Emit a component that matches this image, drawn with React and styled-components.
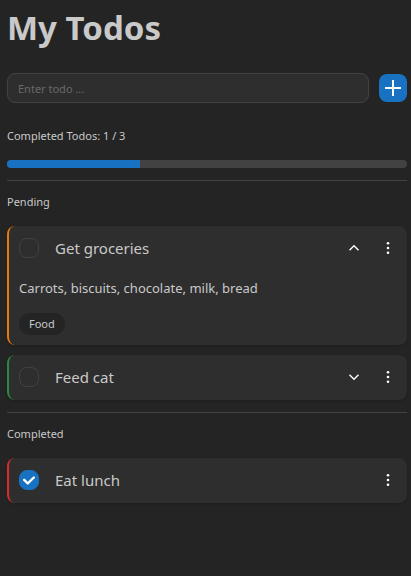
import React, { useState } from "react";
import styled, { createGlobalStyle } from "styled-components";

const GlobalStyle = createGlobalStyle`
  *, *::before, *::after { box-sizing: border-box; }
  body {
    margin: 0;
    background: #242424;
    color: #c9c9c9;
    font-family: "Segoe UI", "Noto Sans", "Open Sans", sans-serif;
    font-size: 15px;
    line-height: 25px;
  }
`;

const Page = styled.main`
  padding: 6px 4px 16px 7px;
`;

const Title = styled.h1`
  margin: 0;
  font-size: 33px;
  line-height: 44px;
  font-weight: 700;
`;

const AddForm = styled.form`
  display: flex;
  align-items: center;
  gap: 10px;
  margin-top: 23px;
`;

const TodoInput = styled.input`
  flex: 1;
  min-width: 0;
  height: 30px;
  padding: 0 10px;
  border: 1px solid #424242;
  border-radius: 8px;
  background: #2e2e2e;
  color: #c9c9c9;
  font-family: inherit;
  font-size: 11px;
  &::placeholder { color: #696969; opacity: 1; }
  &:focus { outline: none; border-color: #1971c2; }
`;

const AddButton = styled.button`
  display: flex;
  align-items: center;
  justify-content: center;
  width: 28px;
  height: 28px;
  padding: 0;
  border: 0;
  border-radius: 8px;
  background: #1971c2;
  color: #fff;
  cursor: pointer;
`;

const Label = styled.h2`
  margin: 0;
  font-size: 11px;
  line-height: 18px;
  font-weight: 400;
`;

const Summary = styled.section`
  display: flex;
  flex-direction: column;
  gap: 15px;
  margin-top: 24px;
`;

const Track = styled.div`
  height: 8px;
  border-radius: 4px;
  background: #424242;
  overflow: hidden;
`;

const Bar = styled.div`
  height: 100%;
  background: #1971c2;
`;

const Divider = styled.hr`
  height: 1px;
  margin: 12px 0;
  border: 0;
  background: #424242;
`;

const List = styled.ul`
  display: flex;
  flex-direction: column;
  gap: 10px;
  margin: 15px 0 0;
  padding: 0;
  list-style: none;
`;

const Card = styled.li`
  padding: 10px;
  border-left: 2px solid ${(p) => p.$accent};
  border-radius: 8px;
  background: #2e2e2e;
  box-shadow: 0 1px 3px rgba(0, 0, 0, 0.05), 0 1px 2px rgba(0, 0, 0, 0.1);
`;

const CardHeader = styled.div`
  display: flex;
  align-items: center;
  gap: 16px;
`;

const CheckLabel = styled.label`
  display: flex;
  flex: 1;
  align-items: center;
  gap: 16px;
  min-width: 0;
  cursor: pointer;
`;

const CheckWrap = styled.span`
  display: grid;
  height: 24px;
  align-self: flex-start;
  place-items: center;
  & > * { grid-area: 1 / 1; }
  svg { pointer-events: none; z-index: 1; }
`;

const Checkbox = styled.input`
  appearance: none;
  width: 20px;
  height: 20px;
  margin: 0;
  border: 1px solid #424242;
  border-radius: 8px;
  background: #2e2e2e;
  cursor: pointer;
  &:checked { border-color: #1971c2; background: #1971c2; }
`;

const IconButton = styled.button`
  display: flex;
  align-items: center;
  justify-content: center;
  align-self: flex-start;
  width: 18px;
  height: 24px;
  padding: 0;
  border: 0;
  border-radius: 4px;
  background: transparent;
  color: #fff;
  cursor: pointer;
`;

const Description = styled.p`
  margin: 16px 0 14px;
  font-size: 13px;
  line-height: 22px;
`;

const Tag = styled.span`
  display: block;
  width: fit-content;
  padding: 0 10px;
  border-radius: 11px;
  background: #242424;
  font-size: 11px;
  line-height: 22px;
`;

const PlusIcon = () => (
  <svg width="18" height="18" viewBox="0 0 18 18" fill="none" stroke="currentColor" strokeWidth="2" aria-hidden="true">
    <path d="M9 1v16M1 9h16" />
  </svg>
);

const ChevronIcon = ({ up }) => (
  <svg width="18" height="18" viewBox="0 0 18 18" fill="none" stroke="currentColor" strokeWidth="1.4" aria-hidden="true">
    <path d={up ? "M4.5 11.3 9 6.8l4.5 4.5" : "M4.5 6.7 9 11.2l4.5-4.5"} />
  </svg>
);

const DotsIcon = () => (
  <svg width="18" height="18" viewBox="0 0 18 18" fill="currentColor" aria-hidden="true">
    <circle cx="9" cy="4.3" r="1.3" />
    <circle cx="9" cy="9" r="1.3" />
    <circle cx="9" cy="13.7" r="1.3" />
  </svg>
);

const CheckIcon = () => (
  <svg width="12" height="9" viewBox="0 0 10 7" fill="#fff" aria-hidden="true">
    <path
      fillRule="evenodd"
      clipRule="evenodd"
      d="M4 4.586L1.707 2.293A1 1 0 1 0 .293 3.707l3 3a.997.997 0 0 0 1.414 0l5-5A1 1 0 1 0 8.293.293L4 4.586z"
    />
  </svg>
);

const initialTodos = [
  { id: 1, title: "Get groceries", text: "Carrots, biscuits, chocolate, milk, bread", tag: "Food", accent: "#e8780c", open: true, done: false },
  { id: 2, title: "Feed cat", text: "Fill the bowl", accent: "#2b8a3e", open: false, done: false },
  { id: 3, title: "Eat lunch", accent: "#d92c2c", open: false, done: true },
];

function TodoCard({ todo, onChange }) {
  return (
    <Card $accent={todo.accent}>
      <CardHeader>
        <CheckLabel>
          <CheckWrap>
            <Checkbox type="checkbox" checked={todo.done} onChange={() => onChange({ done: !todo.done })} />
            {todo.done && <CheckIcon />}
          </CheckWrap>
          {todo.title}
        </CheckLabel>
        {todo.text && (
          <IconButton
            type="button"
            aria-label={todo.open ? "Collapse" : "Expand"}
            aria-expanded={todo.open}
            onClick={() => onChange({ open: !todo.open })}
          >
            <ChevronIcon up={todo.open} />
          </IconButton>
        )}
        <IconButton type="button" aria-label="Todo options">
          <DotsIcon />
        </IconButton>
      </CardHeader>
      {todo.open && <Description>{todo.text}</Description>}
      {todo.open && todo.tag && <Tag>{todo.tag}</Tag>}
    </Card>
  );
}

export default function App() {
  const [todos, setTodos] = useState(initialTodos);
  const [draft, setDraft] = useState("");

  const update = (id, patch) =>
    setTodos((items) => items.map((t) => (t.id === id ? { ...t, ...patch } : t)));

  const addTodo = (event) => {
    event.preventDefault();
    const title = draft.trim();
    if (!title) return;
    setTodos((items) => [...items, { id: Date.now(), title, accent: "#2b8a3e", open: false, done: false }]);
    setDraft("");
  };

  const renderList = (items) => (
    <List>
      {items.map((t) => (
        <TodoCard key={t.id} todo={t} onChange={(patch) => update(t.id, patch)} />
      ))}
    </List>
  );

  const done = todos.filter((t) => t.done);
  const pending = todos.filter((t) => !t.done);

  return (
    <>
      <GlobalStyle />
      <Page>
        <Title>My Todos</Title>
        <AddForm onSubmit={addTodo}>
          <TodoInput
            aria-label="New todo"
            placeholder="Enter todo ..."
            value={draft}
            onChange={(e) => setDraft(e.target.value)}
          />
          <AddButton type="submit" aria-label="Add todo">
            <PlusIcon />
          </AddButton>
        </AddForm>
        <Summary>
          <Label as="div">{`Completed Todos: ${done.length} / ${todos.length}`}</Label>
          <Track role="progressbar" aria-label="Completed todos" aria-valuenow={done.length} aria-valuemin={0} aria-valuemax={todos.length}>
            <Bar style={{ width: `${(done.length / todos.length) * 100}%` }} />
          </Track>
        </Summary>
        <Divider />
        <Label>Pending</Label>
        {renderList(pending)}
        <Divider />
        <Label>Completed</Label>
        {renderList(done)}
      </Page>
    </>
  );
}
